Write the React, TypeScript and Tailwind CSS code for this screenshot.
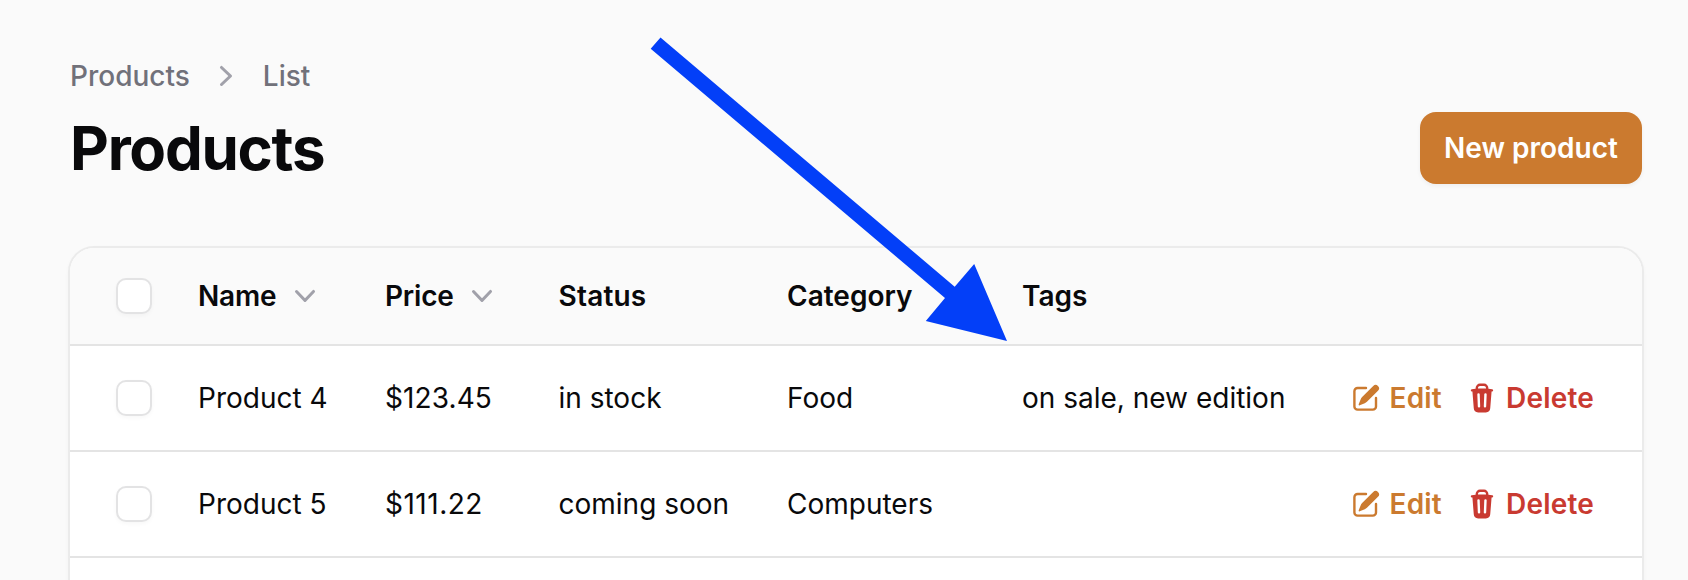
import React from "react";
import { HiMiniPencilSquare, HiMiniTrash } from "react-icons/hi2";

type Product = {
  name: string;
  price: string;
  priceStyle: string;
  status: string;
  category: string;
  tags: string;
};

const products: Product[] = [
  {
    name: "Product 4",
    price: "$123.45",
    priceStyle: "tracking-[0.1px]",
    status: "in stock",
    category: "Food",
    tags: "on sale, new edition",
  },
  {
    name: "Product 5",
    price: "$111.22",
    priceStyle: "tracking-[0.5px]",
    status: "coming soon",
    category: "Computers",
    tags: "",
  },
];

const columns = [
  { label: "Name", sortable: true, style: "mr-px tracking-[-0.2px]" },
  { label: "Price", sortable: true, style: "tracking-[-0.2px]" },
  { label: "Status", sortable: false, style: "tracking-[0.2px]" },
  { label: "Category", sortable: false, style: "" },
  { label: "Tags", sortable: false, style: "" },
];

const rowGrid =
  "grid grid-cols-[128px_187px_173.5px_228.5px_235px_1fr] items-center border-b-2 border-[#e4e4e4]";

function ChevronRight() {
  return (
    <svg className="size-10 text-[#a1a1aa]" viewBox="0 0 20 20" fill="currentColor" aria-hidden="true">
      <path
        fillRule="evenodd"
        clipRule="evenodd"
        d="M7.21 14.77a.75.75 0 01.02-1.06L11.168 10 7.23 6.29a.75.75 0 111.04-1.08l4.5 4.25a.75.75 0 010 1.08l-4.5 4.25a.75.75 0 01-1.06-.02z"
      />
    </svg>
  );
}

function ChevronDown() {
  return (
    <svg className="size-10 text-[#a1a1aa]" viewBox="0 0 20 20" fill="currentColor" aria-hidden="true">
      <path
        fillRule="evenodd"
        clipRule="evenodd"
        d="M5.23 7.21a.75.75 0 011.06.02L10 11.168l3.71-3.938a.75.75 0 111.08 1.04l-4.25 4.5a.75.75 0 01-1.08 0l-4.25-4.5a.75.75 0 01.02-1.06z"
      />
    </svg>
  );
}

function Checkbox() {
  return (
    <div className="ml-[46px] size-9 rounded-[10px] border-2 border-[#e3e3e4] bg-white shadow-[0_2px_4px_rgba(0,0,0,0.03)]" />
  );
}

function ProductRow({ product }: { product: Product }) {
  return (
    <div className={`${rowGrid} h-[106px] bg-white`}>
      <Checkbox />
      <div>{product.name}</div>
      <div className={product.priceStyle}>{product.price}</div>
      <div>{product.status}</div>
      <div>{product.category}</div>
      <div className="flex items-center justify-between whitespace-nowrap pr-12">
        <span>{product.tags}</span>
        <div className="flex items-center gap-6 font-semibold tracking-[0.2px]">
          <a className="flex items-center gap-2 text-[#cb7a2f]">
            <HiMiniPencilSquare className="size-8" />
            Edit
          </a>
          <a className="flex items-center gap-2 text-[#c93a31]">
            <HiMiniTrash className="size-8" />
            Delete
          </a>
        </div>
      </div>
    </div>
  );
}

export default function App() {
  return (
    <div className="relative h-[580px] w-[1688px] overflow-hidden bg-[#fafafa] pl-[70px] pr-[46px] pt-[52px] font-['Inter',sans-serif] text-[28px] leading-[48px] text-[#09090b]">
      <nav className="flex items-center gap-4 font-medium text-[#71717a]">
        <span>Products</span>
        <ChevronRight />
        <span className="ml-px">List</span>
      </nav>
      <header className="mt-3 flex items-center justify-between">
        <h1 className="text-[60px] font-bold leading-[72px] tracking-[-1.25px]">Products</h1>
        <button className="flex h-[72px] w-[222px] items-center justify-center rounded-2xl bg-[#cb7a2f] font-semibold text-white shadow-[0_2px_4px_rgba(0,0,0,0.05)]">
          New product
        </button>
      </header>
      <main className="-ml-0.5 mt-[62px] h-[400px] w-[1576px] overflow-hidden rounded-t-[26px] border-2 border-[#ebebeb] bg-white shadow-[0_2px_4px_rgba(0,0,0,0.03)]">
        <div className={`${rowGrid} h-[98px] bg-[#fafafa] font-semibold`}>
          <Checkbox />
          {columns.map((column) => (
            <div key={column.label} className="flex items-center gap-2">
              <span className={column.style}>{column.label}</span>
              {column.sortable && <ChevronDown />}
            </div>
          ))}
        </div>
        {products.map((product) => (
          <ProductRow key={product.name} product={product} />
        ))}
      </main>
      <svg
        className="pointer-events-none absolute left-0 top-0"
        width="1688"
        height="580"
        viewBox="0 0 1688 580"
        fill="#033ff8"
        aria-hidden="true"
      >
        <path d="M660.5 37.5 954.7 286.7 974.2 264 1007 341 925.8 321 945 298 650.7 48.7Z" />
      </svg>
    </div>
  );
}
